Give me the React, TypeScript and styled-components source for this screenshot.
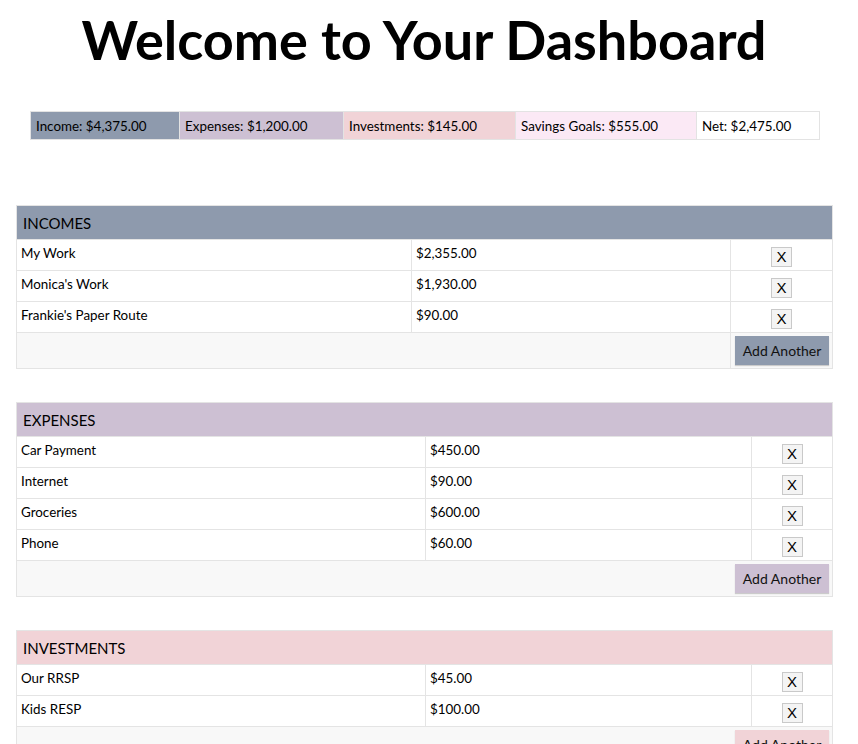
import React from "react";
import styled, { createGlobalStyle } from "styled-components";

const GlobalStyle = createGlobalStyle`
  html, body { margin: 0; padding: 0; background: #ffffff; }
  body { font-family: Lato, "Open Sans", sans-serif; color: #000; }
`;

const Page = styled.div`
  width: 816px;
  margin: 0 0 0 16px;
  padding-top: 7px;
  display: flex;
  flex-direction: column;
  align-items: stretch;
`;

const Title = styled.h1`
  margin: 0;
  font-family: Lato, sans-serif;
  font-weight: 700;
  font-size: 54px;
  text-align: center;
  color: #000;
`;

const Summary = styled.div`
  display: flex;
  margin: 39px 0 0 14px;
  width: 790px;
  border: 1px solid #e3e3e3;
  box-sizing: border-box;
`;

const SummaryItem = styled.div<{ $bg: string; $w: number }>`
  flex: 0 0 ${(p) => p.$w}px;
  height: 27px;
  box-sizing: border-box;
  display: flex;
  align-items: center;
  padding: 0 5px;
  font-size: 13.4px;
  white-space: nowrap;
  background: ${(p) => p.$bg};
  border-right: 1px solid #e3e3e3;
  &:last-child { border-right: none; }
`;

const Sections = styled.div`
  display: flex;
  flex-direction: column;
  gap: 33px;
  margin-top: 65px;
`;

const Table = styled.table`
  width: 816px;
  border-collapse: collapse;
  table-layout: fixed;
  font-size: 13.4px;
  border: 1px solid #e4e4e4;
`;

const HeadCell = styled.th<{ $bg: string }>`
  background: ${(p) => p.$bg};
  text-align: left;
  font-weight: 400;
  font-size: 15px;
  padding: 7px 6px 6px;
  height: 20px;
  text-transform: uppercase;
`;

const Cell = styled.td<{ $center?: boolean }>`
  border: 1px solid #e4e4e4;
  padding: 5px 4px 3px;
  height: 22px;
  vertical-align: top;
  text-align: ${(p) => (p.$center ? "center" : "left")};
  line-height: 17px;
`;

const FootCell = styled.td<{ $right?: boolean }>`
  background: #f8f8f8;
  border: 1px solid #e4e4e4;
  padding: 3px 3px;
  height: 29px;
  white-space: nowrap;
  text-align: ${(p) => (p.$right ? "right" : "left")};
`;

const RemoveButton = styled.button`
  width: 21px;
  height: 20px;
  padding: 0;
  margin: 2px 0 0;
  border: 1px solid #c9c9c9;
  background: #f4f4f4;
  font-family: "Liberation Sans", Arial, sans-serif;
  font-size: 15px;
  line-height: 18px;
  color: #000;
  box-sizing: border-box;
  vertical-align: top;
`;

const AddButton = styled.button<{ $bg: string }>`
  height: 29px;
  width: 94px;
  padding: 0;
  margin: 0;
  background: ${(p) => p.$bg};
  border: none;
  box-shadow: 0 1px 1px rgba(0, 0, 0, 0.18);
  font-family: Lato, sans-serif;
  font-size: 14px;
  white-space: nowrap;
  color: #111;
  vertical-align: top;
`;

type Item = { name: string; amount: string };
type SectionData = {
  title: string;
  color: string;
  cols: [number, number, number];
  splitFooter: boolean;
  items: Item[];
};

const sections: SectionData[] = [
  {
    title: "Incomes",
    color: "#8e9aad",
    cols: [395, 319, 102],
    splitFooter: true,
    items: [
      { name: "My Work", amount: "$2,355.00" },
      { name: "Monica's Work", amount: "$1,930.00" },
      { name: "Frankie's Paper Route", amount: "$90.00" },
    ],
  },
  {
    title: "Expenses",
    color: "#cdc0d3",
    cols: [409, 326, 81],
    splitFooter: false,
    items: [
      { name: "Car Payment", amount: "$450.00" },
      { name: "Internet", amount: "$90.00" },
      { name: "Groceries", amount: "$600.00" },
      { name: "Phone", amount: "$60.00" },
    ],
  },
  {
    title: "Investments",
    color: "#f1d3d7",
    cols: [409, 326, 81],
    splitFooter: false,
    items: [
      { name: "Our RRSP", amount: "$45.00" },
      { name: "Kids RESP", amount: "$100.00" },
    ],
  },
  {
    title: "Savings Goals",
    color: "#fbe9f5",
    cols: [409, 326, 81],
    splitFooter: false,
    items: [
      { name: "Vacation", amount: "$300.00" },
      { name: "Emergency Fund", amount: "$255.00" },
    ],
  },
];

const summary = [
  { label: "Income: $4,375.00", bg: "#8e9aad", w: 149 },
  { label: "Expenses: $1,200.00", bg: "#cdc0d3", w: 164 },
  { label: "Investments: $145.00", bg: "#f1d3d7", w: 172 },
  { label: "Savings Goals: $555.00", bg: "#fbe9f5", w: 181 },
  { label: "Net: $2,475.00", bg: "#ffffff", w: 122 },
];

function Section({ data }: { data: SectionData }) {
  return (
    <Table>
      <colgroup>
        {data.cols.map((w, i) => (
          <col key={i} style={{ width: w }} />
        ))}
      </colgroup>
      <thead>
        <tr>
          <HeadCell colSpan={3} $bg={data.color}>
            {data.title}
          </HeadCell>
        </tr>
      </thead>
      <tbody>
        {data.items.map((it) => (
          <tr key={it.name}>
            <Cell>{it.name}</Cell>
            <Cell>{it.amount}</Cell>
            <Cell $center>
              <RemoveButton>X</RemoveButton>
            </Cell>
          </tr>
        ))}
        <tr>
          {data.splitFooter ? (
            <>
              <FootCell colSpan={2} />
              <FootCell $right>
                <AddButton $bg={data.color}>Add Another</AddButton>
              </FootCell>
            </>
          ) : (
            <FootCell colSpan={3} $right>
              <AddButton $bg={data.color}>Add Another</AddButton>
            </FootCell>
          )}
        </tr>
      </tbody>
    </Table>
  );
}

export default function App() {
  return (
    <>
      <GlobalStyle />
      <Page>
        <Title>Welcome to Your Dashboard</Title>
        <Summary>
          {summary.map((s) => (
            <SummaryItem key={s.label} $bg={s.bg} $w={s.w}>
              {s.label}
            </SummaryItem>
          ))}
        </Summary>
        <Sections>
          {sections.map((s) => (
            <Section key={s.title} data={s} />
          ))}
        </Sections>
      </Page>
    </>
  );
}
